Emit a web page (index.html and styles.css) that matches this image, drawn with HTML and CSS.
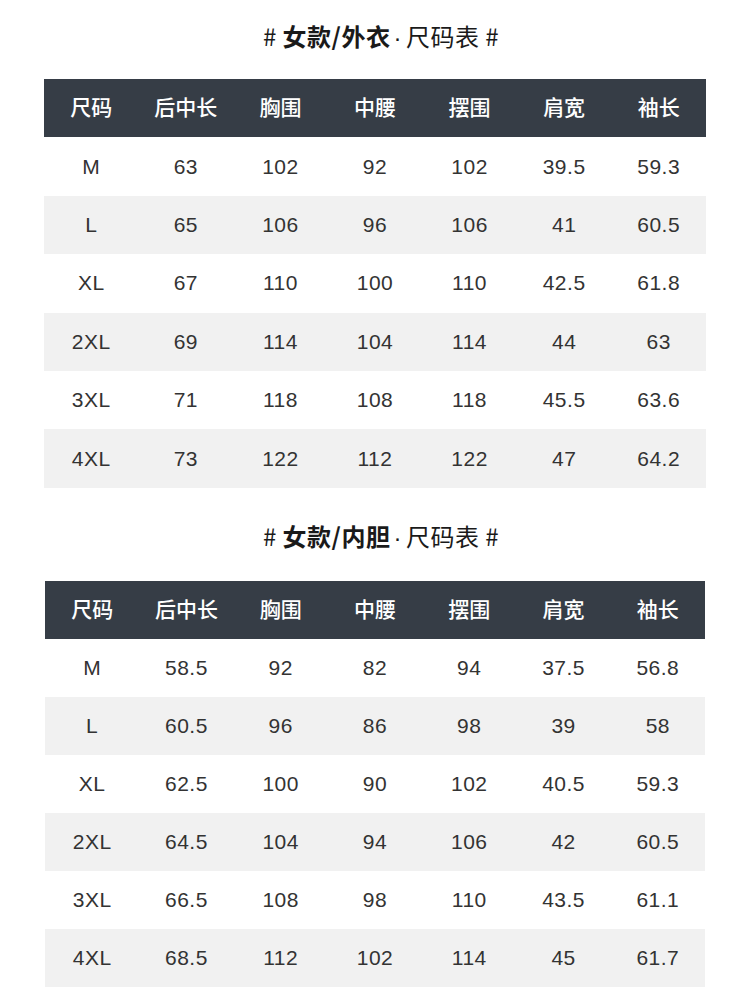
FILE: index.html
```html
<!DOCTYPE html>
<html lang="zh">
<head>
<meta charset="utf-8">
<link rel="stylesheet" href="styles.css">
</head>
<body>
<div class="page">
  <h2 class="title title-first"># <b>女款/外衣</b><span class="dot">·</span>尺码表 #</h2>
  <div class="table t1">
    <div class="row head"><div>尺码</div><div>后中长</div><div>胸围</div><div>中腰</div><div>摆围</div><div>肩宽</div><div>袖长</div></div>
    <div class="row"><div>M</div><div>63</div><div>102</div><div>92</div><div>102</div><div>39.5</div><div>59.3</div></div>
    <div class="row alt"><div>L</div><div>65</div><div>106</div><div>96</div><div>106</div><div>41</div><div>60.5</div></div>
    <div class="row"><div>XL</div><div>67</div><div>110</div><div>100</div><div>110</div><div>42.5</div><div>61.8</div></div>
    <div class="row alt"><div>2XL</div><div>69</div><div>114</div><div>104</div><div>114</div><div>44</div><div>63</div></div>
    <div class="row"><div>3XL</div><div>71</div><div>118</div><div>108</div><div>118</div><div>45.5</div><div>63.6</div></div>
    <div class="row alt"><div>4XL</div><div>73</div><div>122</div><div>112</div><div>122</div><div>47</div><div>64.2</div></div>
  </div>
  <h2 class="title title-second"># <b>女款/内胆</b><span class="dot">·</span>尺码表 #</h2>
  <div class="table t2">
    <div class="row head"><div>尺码</div><div>后中长</div><div>胸围</div><div>中腰</div><div>摆围</div><div>肩宽</div><div>袖长</div></div>
    <div class="row"><div>M</div><div>58.5</div><div>92</div><div>82</div><div>94</div><div>37.5</div><div>56.8</div></div>
    <div class="row alt"><div>L</div><div>60.5</div><div>96</div><div>86</div><div>98</div><div>39</div><div>58</div></div>
    <div class="row"><div>XL</div><div>62.5</div><div>100</div><div>90</div><div>102</div><div>40.5</div><div>59.3</div></div>
    <div class="row alt"><div>2XL</div><div>64.5</div><div>104</div><div>94</div><div>106</div><div>42</div><div>60.5</div></div>
    <div class="row"><div>3XL</div><div>66.5</div><div>108</div><div>98</div><div>110</div><div>43.5</div><div>61.1</div></div>
    <div class="row alt"><div>4XL</div><div>68.5</div><div>112</div><div>102</div><div>114</div><div>45</div><div>61.7</div></div>
  </div>
</div>
</body>
</html>
```

FILE: styles.css
```css
html, body {
  margin: 0;
  padding: 0;
  background: #ffffff;
}

.page {
  width: 750px;
  display: flex;
  flex-direction: column;
  align-items: center;
  font-family: "Liberation Sans", "Noto Sans CJK SC", sans-serif;
  color: #333333;
}

.title {
  margin: 0;
  height: 30px;
  line-height: 30px;
  font-size: 24px;
  font-weight: normal;
  color: #1a1a1a;
  padding-left: 12px;
  letter-spacing: 0.5px;
  font-family: "Noto Sans CJK SC", sans-serif;
}

.title b {
  font-weight: bold;
}

.dot {
  font-family: "Liberation Sans", sans-serif;
  margin: 0 4px 0 3px;
}

.title-first {
  margin-top: 21px;
  margin-bottom: 28px;
}

.title-second {
  margin-top: 33px;
  margin-bottom: 30px;
}

.table {
  width: 662px;
  display: flex;
  flex-direction: column;
}

.t2 {
  width: 660px;
}

.row {
  display: grid;
  grid-template-columns: repeat(7, 1fr);
  height: 58.4px;
  align-items: center;
  text-align: center;
  font-size: 21px;
  letter-spacing: 0.5px;
}

.t2 .row {
  height: 58px;
}

.row.alt {
  background: #f1f1f1;
}

.row.head {
  background: #363d46;
  color: #ffffff;
  font-size: 21px;
  letter-spacing: 0;
  font-weight: 500;
  padding-bottom: 4px;
  box-sizing: border-box;
  font-family: "Noto Sans CJK SC", sans-serif;
}
```
